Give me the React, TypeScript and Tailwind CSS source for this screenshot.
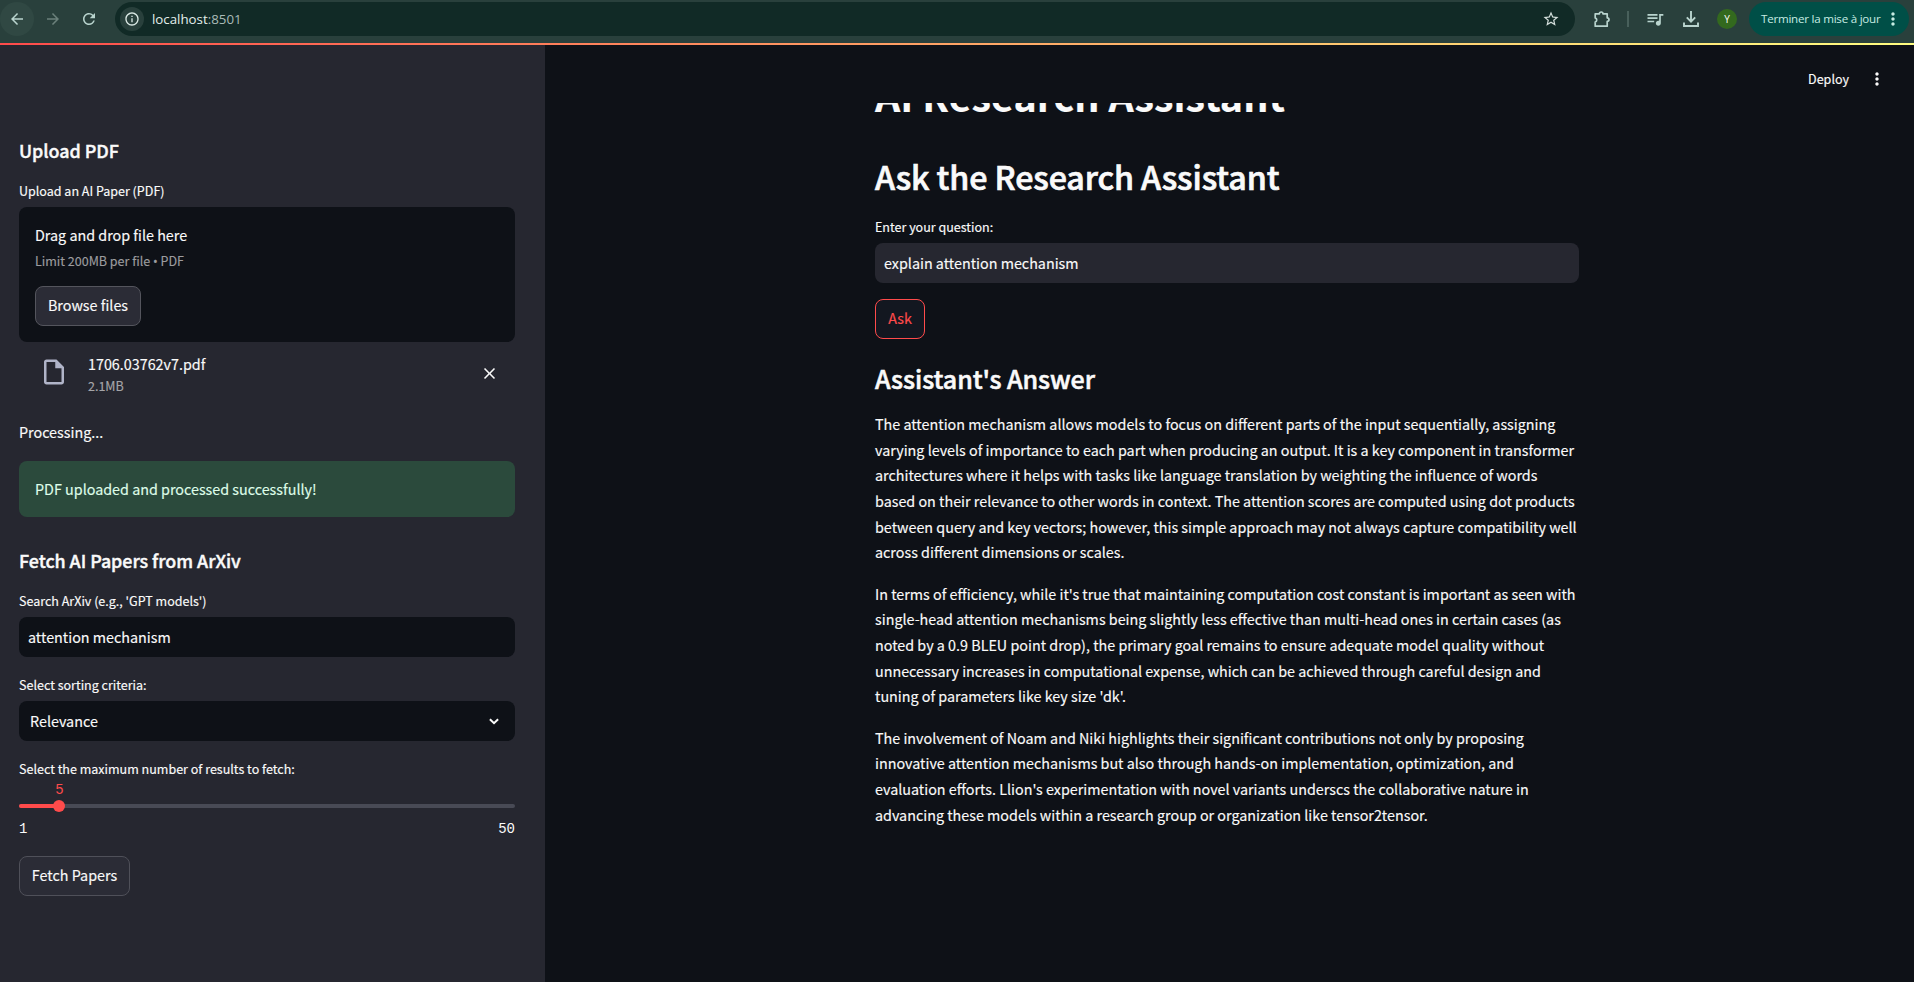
import type { ReactNode } from "react";
import {
  MdArrowBack,
  MdArrowForward,
  MdClose,
  MdInfoOutline,
  MdMoreVert,
  MdOutlineInsertDriveFile,
  MdQueueMusic,
  MdRefresh,
  MdStarBorder,
} from "react-icons/md";

const SLIDER = { min: 1, max: 50, value: 5 };

const ANSWER = [
  "The attention mechanism allows models to focus on different parts of the input sequentially, assigning varying levels of importance to each part when producing an output. It is a key component in transformer architectures where it helps with tasks like language translation by weighting the influence of words based on their relevance to other words in context. The attention scores are computed using dot products between query and key vectors; however, this simple approach may not always capture compatibility well across different dimensions or scales.",
  "In terms of efficiency, while it's true that maintaining computation cost constant is important as seen with single-head attention mechanisms being slightly less effective than multi-head ones in certain cases (as noted by a 0.9 BLEU point drop), the primary goal remains to ensure adequate model quality without unnecessary increases in computational expense, which can be achieved through careful design and tuning of parameters like key size 'dk'.",
  "The involvement of Noam and Niki highlights their significant contributions not only by proposing innovative attention mechanisms but also through hands-on implementation, optimization, and evaluation efforts. Llion's experimentation with novel variants underscs the collaborative nature in advancing these models within a research group or organization like tensor2tensor.",
];

function PuzzleIcon() {
  return (
    <svg width="20" height="20" viewBox="0 0 20 20" fill="none" stroke="currentColor" strokeWidth="1.7" strokeLinejoin="round">
      <path d="M3.2 4.8h4.2a1.8 1.8 0 0 1 3.6 0h4.2v4a1.8 1.8 0 0 1 0 3.6v4.8h-12v-4.1a2.2 2.2 0 0 0 0-4.2z" />
    </svg>
  );
}

function DownloadIcon() {
  return (
    <svg width="18" height="18" viewBox="0 0 18 18" fill="none" stroke="currentColor" strokeWidth="1.9">
      <path d="M9 1v10.5M4.8 7.4L9 11.6l4.2-4.2M2 12.5V16h14v-3.5" />
    </svg>
  );
}

function ChevronIcon() {
  return (
    <svg width="10" height="7" viewBox="0 0 10 7" fill="none" stroke="currentColor" strokeWidth="2" className="mr-[5px] mt-[10px]">
      <path d="M0.9 1.2L5 5.2l4.1-4" />
    </svg>
  );
}

function BrowserBar() {
  return (
    <div className="flex h-[43px] shrink-0 items-start bg-[#29403c] pt-[2px] font-['Open_Sans',sans-serif] text-[#b9d4ce]">
      <div className="flex h-[34px] w-[34px] items-center justify-center rounded-full bg-[#304843]">
        <MdArrowBack size={18} />
      </div>
      <div className="ml-[2px] flex h-[34px] w-[34px] items-center justify-center text-[#6b807b]">
        <MdArrowForward size={18} />
      </div>
      <div className="ml-[2px] flex h-[34px] w-[34px] items-center justify-center">
        <MdRefresh size={18} />
      </div>
      <div className="ml-[9px] flex h-[34px] w-[1460px] items-center rounded-full bg-[#112a26] pl-[5px] pr-[15px]">
        <div className="flex h-6 w-6 items-center justify-center rounded-full bg-[#29403c] text-[#dbe9e5]">
          <MdInfoOutline size={16} />
        </div>
        <div className="ml-2 flex-1 whitespace-nowrap text-[13.3px] leading-[18px] text-[#a9bab6]">
          <span className="text-[#e3efec]">localhost</span>:8501
        </div>
        <MdStarBorder size={18} className="text-[#d5dfdc]" />
      </div>
      <div className="ml-[17px] flex h-[34px] items-center">
        <PuzzleIcon />
        <div className="ml-[15px] h-4 w-[2px] bg-[#48605b]" />
        <MdQueueMusic size={20} className="ml-[16px]" />
        <div className="ml-[17px]">
          <DownloadIcon />
        </div>
        <div className="ml-[17px] flex h-5 w-5 items-center justify-center rounded-full bg-[#33691e] text-[10px] text-white">
          Y
        </div>
      </div>
      <div className="ml-3 flex h-[34px] w-[160px] items-center justify-between rounded-full bg-[#004f47] pl-3 pr-[6px] text-[#c6ece3]">
        <span className="w-[120px] whitespace-nowrap text-[11.6px] leading-4 tracking-[-0.24px]">
          Terminer la mise à jour
        </span>
        <MdMoreVert size={20} className="shrink-0" />
      </div>
    </div>
  );
}

function Label({ children, className }: { children: ReactNode; className: string }) {
  return <div className={`whitespace-nowrap text-[12.53px] leading-[21px] ${className}`}>{children}</div>;
}

function Sidebar() {
  const percent = ((SLIDER.value - SLIDER.min) / (SLIDER.max - SLIDER.min)) * 100;
  return (
    <aside className="flex w-[545px] shrink-0 flex-col items-start bg-[#262730] pl-[19px] pr-[30px] pt-[92px]">
      <h3 className="text-[17.9px] font-medium leading-[26px] tracking-[-0.05px] [-webkit-text-stroke:0.4px]">
        Upload PDF
      </h3>
      <Label className="mt-[17px]">Upload an AI Paper (PDF)</Label>
      <div className="mt-[6px] flex h-[135px] w-full flex-col items-start rounded-lg bg-[#0e1117] px-4 pt-[15px]">
        <div className="leading-[25px]">Drag and drop file here</div>
        <Label className="mt-[3px] h-[21px] text-[#9c9c9f]">
          Limit 200MB per file <span className="font-['Noto_Sans',sans-serif] leading-none">•</span> PDF
        </Label>
        <button className="mt-[15px] h-10 w-[106px] whitespace-nowrap rounded-lg border border-[#54555d] bg-[#2b2c36] pb-[3px] leading-[25px]">
          Browse files
        </button>
      </div>
      <div className="flex w-full items-start pl-[19.5px] pr-[16.5px] pt-[11px]">
        <MdOutlineInsertDriveFile size={30} className="mt-1 text-[#b0b4c8]" />
        <div className="ml-[19.5px] flex-1">
          <div className="leading-[21px]">1706.03762v7.pdf</div>
          <Label className="mt-px text-[#a5a5a9]">2.1MB</Label>
        </div>
        <MdClose size={19} className="mt-[11px]" />
      </div>
      <div className="mt-[23px] leading-[25px]">Processing...</div>
      <div className="mt-[17px] h-14 w-full rounded-lg bg-[#2b4a3c] px-4 pt-[15px] leading-[25px] text-[#dffde9]">
        PDF uploaded and processed successfully!
      </div>
      <h3 className="mt-[30px] text-[17.9px] font-medium leading-[26px] tracking-[-0.05px] [-webkit-text-stroke:0.4px]">
        Fetch AI Papers from ArXiv
      </h3>
      <Label className="mt-[17px]">Search ArXiv (e.g., 'GPT models')</Label>
      <div className="mt-[6px] h-10 w-full rounded-lg bg-[#0e1117] px-[9px] pt-[7px] leading-[25px]">
        attention mechanism
      </div>
      <Label className="mt-[17px]">Select sorting criteria:</Label>
      <div className="mt-[6px] flex h-10 w-full items-start justify-between rounded-lg bg-[#0e1117] px-[11px] pt-[7px]">
        <span className="leading-[25px]">Relevance</span>
        <ChevronIcon />
      </div>
      <Label className="mt-[17px]">Select the maximum number of results to fetch:</Label>
      <div className="w-full pt-[25px] font-['Liberation_Mono',monospace] text-[14px] leading-4 [-webkit-text-stroke:0px]">
        <div className="relative h-1 rounded-full bg-[#484a55]">
          <div className="h-1 rounded-full bg-[#ff4b4b]" style={{ width: `${percent}%` }} />
          <div
            className="absolute -top-1 h-3 w-3 -translate-x-1/2 rounded-full bg-[#ff4b4b]"
            style={{ left: `${percent}%` }}
          />
          <div className="absolute -top-[22px] -translate-x-1/2 text-[#ff4b4b]" style={{ left: `${percent}%` }}>
            {SLIDER.value}
          </div>
        </div>
        <div className="mt-[13px] flex justify-between">
          <span>{SLIDER.min}</span>
          <span>{SLIDER.max}</span>
        </div>
      </div>
      <button className="mt-[19px] h-10 w-[111px] whitespace-nowrap rounded-lg border border-[#4f5059] bg-[#2b2c36] pb-[3px] leading-[25px]">
        Fetch Papers
      </button>
    </aside>
  );
}

function MainPanel() {
  return (
    <main className="flex min-w-0 flex-1 flex-col">
      <header className="flex h-[58px] shrink-0 items-center justify-end pr-[27px] pt-[10px]">
        <span className="pb-[2px] text-[12.53px] leading-[21px]">Deploy</span>
        <MdMoreVert size={20} className="ml-[18px]" />
      </header>
      <section className="min-h-0 flex-1 overflow-hidden pl-[330px]">
        <div className="flex w-[704px] flex-col items-start">
          <h1 className="-mt-[37px] whitespace-nowrap text-[39.38px] font-bold leading-[57px] tracking-[0.03px]">
            AI Research Assistant
          </h1>
          <h2 className="mt-[30px] whitespace-nowrap text-[32.22px] font-medium leading-[46px] tracking-[-0.1px] [-webkit-text-stroke:0.7px]">
            Ask the Research Assistant
          </h2>
          <Label className="mt-[17px]">Enter your question:</Label>
          <div className="mt-[6px] h-10 w-full rounded-lg bg-[#262730] px-[9px] pt-[7px] leading-[25px]">
            explain attention mechanism
          </div>
          <button className="mt-4 h-10 w-[50px] rounded-lg border border-[#ff4b4b] bg-[#131720] pb-[3px] leading-[25px] text-[#ff4b4b]">
            Ask
          </button>
          <h3 className="mt-[21px] whitespace-nowrap text-[25.06px] font-medium leading-9 tracking-[-0.06px] [-webkit-text-stroke:0.55px]">
            Assistant's Answer
          </h3>
          <div className="mt-[15.25px] flex flex-col gap-4 leading-[25.6px]">
            {ANSWER.map((paragraph) => (
              <p key={paragraph}>{paragraph}</p>
            ))}
          </div>
        </div>
      </section>
    </main>
  );
}

export default function App() {
  return (
    <div className="flex h-[982px] w-[1914px] flex-col overflow-hidden bg-[#0e1117] font-['Noto_Sans_CJK_SC',sans-serif] text-[14.33px] text-[#fafafa]">
      <BrowserBar />
      <div className="h-[2px] shrink-0 bg-[linear-gradient(90deg,#ff4b4b,#fffd80)]" />
      <div className="flex min-h-0 flex-1 [-webkit-text-stroke:0.15px]">
        <Sidebar />
        <MainPanel />
      </div>
    </div>
  );
}
